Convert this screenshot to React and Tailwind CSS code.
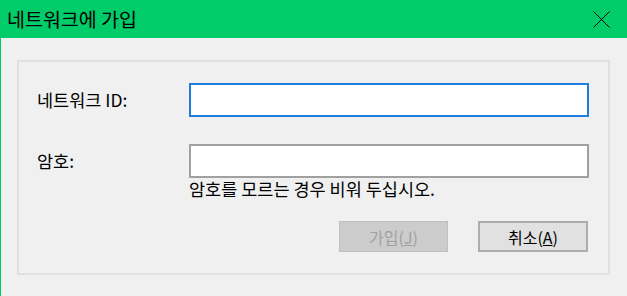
export default function App() {
  const font = { fontFamily: '"Malgun Gothic", "Noto Sans CJK KR", sans-serif' };
  return (
    <div
      className="w-[627px] h-[296px] bg-[#f0f0f0] border-l border-[#00cc6a] flex flex-col text-black overflow-hidden"
      style={font}
    >
      {/* Title bar */}
      <div className="h-[38px] bg-[#00cc6a] flex items-center justify-between pl-[6px] pr-[17px] shrink-0">
        <span className="text-[19.5px] leading-none">네트워크에 가입</span>
        <svg width="17" height="17" viewBox="0 0 17 17" className="block">
          <path d="M0.5 0.5 L16.5 16.5 M16.5 0.5 L0.5 16.5" stroke="#000" strokeWidth="1" />
        </svg>
      </div>

      {/* Body */}
      <div className="flex-1 pt-[22px] pl-[16px] pr-[17px] pb-[21px]">
        <div className="h-full border-2 border-[#e0e0e0] pt-[21px] pl-[18px] pr-[19px] pb-[21px] flex flex-col">
          <div className="flex items-center">
            <span className="w-[152px] text-[17.5px] leading-none">네트워크 ID:</span>
            <div className="flex-1 h-[34px] bg-white border-2 border-[#1a80dc]" />
          </div>

          <div className="flex mt-[27px]">
            <span className="w-[152px] h-[34px] flex items-center text-[17.5px] leading-none">암호:</span>
            <div className="flex-1 flex flex-col">
              <div className="h-[34px] bg-white border-2 border-[#a0a0a0]" />
              <span className="text-[17.5px] leading-[20px] mt-[1px]">암호를 모르는 경우 비워 두십시오.</span>
            </div>
          </div>

          <div className="flex justify-end gap-[30px] mt-auto pr-[1px]">
            <button className="w-[109px] h-[31px] bg-[#cccccc] border border-[#bfbfbf] text-[#a0a0a0] text-[16px] leading-none">
              가입(<span className="underline">J</span>)
            </button>
            <button className="w-[110px] h-[31px] bg-[#e1e1e1] border-2 border-[#adadad] text-black text-[16px] leading-none">
              취소(<span className="underline">A</span>)
            </button>
          </div>
        </div>
      </div>
    </div>
  );
}
